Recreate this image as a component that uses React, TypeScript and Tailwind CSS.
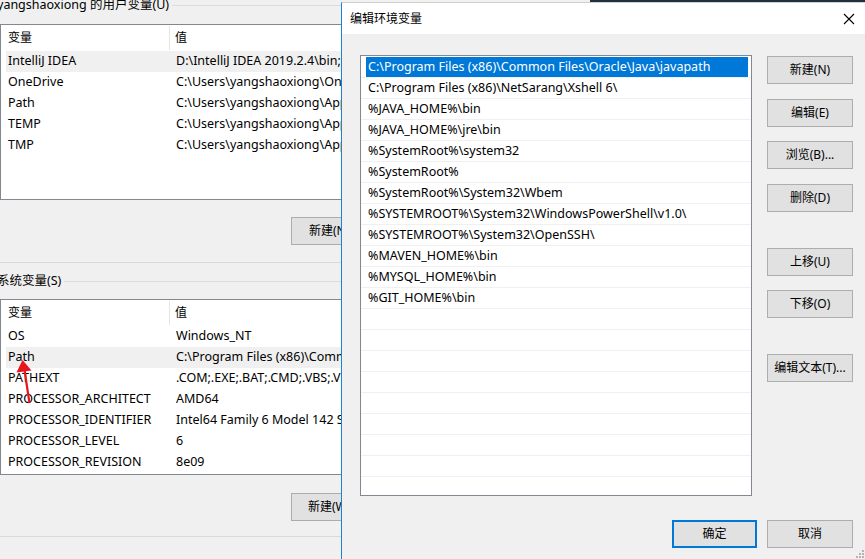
import React from "react";

const userVars = [
  { name: "IntelliJ IDEA", value: "D:\\IntelliJ IDEA 2019.2.4\\bin;" },
  { name: "OneDrive", value: "C:\\Users\\yangshaoxiong\\OneDrive" },
  { name: "Path", value: "C:\\Users\\yangshaoxiong\\AppData\\Local" },
  { name: "TEMP", value: "C:\\Users\\yangshaoxiong\\AppData\\Local\\Temp" },
  { name: "TMP", value: "C:\\Users\\yangshaoxiong\\AppData\\Local\\Temp" },
];

const sysVars = [
  { name: "OS", value: "Windows_NT" },
  { name: "Path", value: "C:\\Program Files (x86)\\Common Files\\Oracle" },
  { name: "PATHEXT", value: ".COM;.EXE;.BAT;.CMD;.VBS;.VBE;.JS" },
  { name: "PROCESSOR_ARCHITECT", value: "AMD64" },
  { name: "PROCESSOR_IDENTIFIER", value: "Intel64 Family 6 Model 142 Stepping 10" },
  { name: "PROCESSOR_LEVEL", value: "6" },
  { name: "PROCESSOR_REVISION", value: "8e09" },
];

const paths = [
  "C:\\Program Files (x86)\\Common Files\\Oracle\\Java\\javapath",
  "C:\\Program Files (x86)\\NetSarang\\Xshell 6\\",
  "%JAVA_HOME%\\bin",
  "%JAVA_HOME%\\jre\\bin",
  "%SystemRoot%\\system32",
  "%SystemRoot%",
  "%SystemRoot%\\System32\\Wbem",
  "%SYSTEMROOT%\\System32\\WindowsPowerShell\\v1.0\\",
  "%SYSTEMROOT%\\System32\\OpenSSH\\",
  "%MAVEN_HOME%\\bin",
  "%MYSQL_HOME%\\bin",
  "%GIT_HOME%\\bin",
];

function Btn({ children, className = "" }: { children: React.ReactNode; className?: string }) {
  return (
    <div
      className={`flex h-[28px] w-[86px] shrink-0 items-center justify-center whitespace-nowrap border border-[#adadad] bg-[#e1e1e1] text-[12px] ${className}`}
    >
      {children}
    </div>
  );
}

function VarList({ rows, hot }: { rows: { name: string; value: string }[]; hot: number }) {
  return (
    <div className="h-[176px] w-[430px] overflow-hidden border border-[#828790] bg-white">
      <div className="flex h-[26px] items-center text-[12px]">
        <div className="flex h-[24px] w-[169px] shrink-0 items-center border-r border-[#e5e5e5] pl-[7px]">变量</div>
        <div className="pl-[5px]">值</div>
      </div>
      {rows.map((r, i) => (
        <div
          key={r.name}
          className={`ml-[5px] flex h-[21px] items-center whitespace-nowrap ${i === hot ? "bg-[#f0f0f0]" : ""}`}
        >
          <div className="w-[165px] shrink-0 overflow-hidden pl-[2px]">{r.name}</div>
          <div className="pl-[5px]">{r.value}</div>
        </div>
      ))}
    </div>
  );
}

function GroupLabel({ text, className = "" }: { text: string; className?: string }) {
  return (
    <div className={`-ml-[3px] flex h-[10px] items-center gap-[3px] ${className}`}>
      <span className="whitespace-nowrap leading-[10px]">{text}</span>
      <div className="h-px flex-1 bg-[#dcdcdc]" />
    </div>
  );
}

export default function App() {
  const rows = Array.from({ length: 21 }, (_, i) => paths[i] ?? "");

  return (
    <div className="relative h-[559px] w-[865px] overflow-hidden bg-[#f0f0f0] font-['Noto_Sans','Noto_Sans_CJK_SC',sans-serif] text-[12.5px] text-black">
      {/* background: environment variables window, covered by the dialog from x=341 */}
      <div className="w-[341px] overflow-hidden">
        <div className="w-[430px]">
          <GroupLabel text="yangshaoxiong 的用户变量(U)" />
          <div className="mt-[14px]">
            <VarList rows={userVars} hot={0} />
          </div>
          <div className="mt-[17px] flex gap-[10px] pl-[291px]">
            <Btn>新建(N)...</Btn>
          </div>
          <div className="mt-[17px] h-px bg-[#d9d9d9]" />
          <GroupLabel text="系统变量(S)" className="mt-[13px]" />
          <div className="mt-[13px]">
            <VarList rows={sysVars} hot={1} />
          </div>
          <div className="mt-[18px] flex gap-[10px] pl-[291px]">
            <Btn>新建(W)...</Btn>
          </div>
          <div className="mt-[15px] h-px bg-[#d9d9d9]" />
        </div>
      </div>

      {/* red annotation arrow */}
      <svg className="absolute left-0 top-[355px]" width="40" height="55" viewBox="0 355 40 55">
        <line x1="29.5" y1="403" x2="24.5" y2="370" stroke="#e8141e" strokeWidth="2.2" />
        <polygon points="22.5,360 31.5,370.5 16.5,372.5" fill="#e8141e" />
      </svg>

      {/* edge of another window behind */}
      <div className="absolute left-[590px] right-0 top-0 h-[2px] bg-[#22303d]" />

      {/* dialog */}
      <div className="absolute bottom-0 left-[341px] top-[2px] flex w-[524px] flex-col border-l border-t border-l-[#1883d7] border-t-[#d0d0d0] bg-[#f0f0f0]">
        <div className="flex h-[31px] items-center justify-between bg-white pl-[8px] pr-[10px] text-[12px]">
          <span>编辑环境变量</span>
          <svg width="12" height="12" viewBox="0 0 12 12">
            <path d="M1 1 L11 11 M11 1 L1 11" stroke="#000" strokeWidth="1.1" />
          </svg>
        </div>

        <div className="mt-[21px] flex pl-[18px]">
          <div className="h-[441px] w-[392px] overflow-hidden border border-[#828790] bg-white pt-[1px]">
            {rows.map((p, i) => (
              <div key={i} className="h-[21px] border-b border-[#f0f0f0]">
                <div
                  className={`ml-[5px] mr-[3px] flex h-[20px] items-center whitespace-nowrap pl-[2px] ${
                    i === 0 ? "bg-[#0078d7] text-white" : ""
                  }`}
                >
                  {p}
                </div>
              </div>
            ))}
          </div>

          <div className="ml-[15px] flex flex-col pt-[1px]">
            <Btn>新建(N)</Btn>
            <Btn className="mt-[15px]">编辑(E)</Btn>
            <Btn className="mt-[14px]">浏览(B)...</Btn>
            <Btn className="mt-[15px]">删除(D)</Btn>
            <Btn className="mt-[36px]">上移(U)</Btn>
            <Btn className="mt-[14px]">下移(O)</Btn>
            <Btn className="mt-[36px]">编辑文本(T)...</Btn>
          </div>
        </div>

        <div className="mt-[24px] flex justify-end gap-[10px] pr-[12px]">
          <div className="flex h-[28px] w-[85px] items-center justify-center border-2 border-[#0078d7] bg-[#e1e1e1] text-[12px]">
            确定
          </div>
          <Btn>取消</Btn>
        </div>

        <svg className="absolute bottom-[1px] right-[1px]" width="8" height="8" viewBox="0 0 8 8">
          <g fill="#b4b4b4">
            <rect x="6" y="0" width="2" height="2" />
            <rect x="3" y="3" width="2" height="2" />
            <rect x="6" y="3" width="2" height="2" />
            <rect x="0" y="6" width="2" height="2" />
            <rect x="3" y="6" width="2" height="2" />
            <rect x="6" y="6" width="2" height="2" />
          </g>
        </svg>
      </div>
    </div>
  );
}
